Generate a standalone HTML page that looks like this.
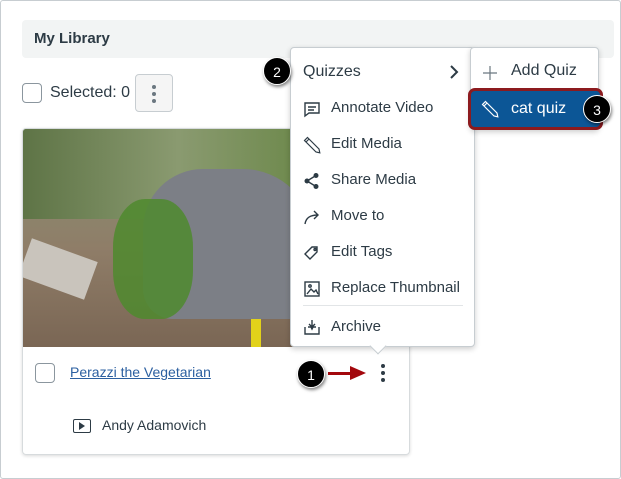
<!DOCTYPE html>
<html><head><style>
*{box-sizing:border-box;margin:0;padding:0}
body{width:621px;height:479px;background:#fff;font-family:"Liberation Sans",sans-serif;color:#2d3b45;position:relative;overflow:hidden}
.frame{position:absolute;left:0;top:0;width:621px;height:479px;border:1px solid #c7cdd1;border-radius:3px}
.hdr{position:absolute;left:22px;top:20px;width:592px;height:38px;background:#f2f4f4;border-radius:4px;font-weight:bold;font-size:15px;line-height:38px;padding-left:12px}
.cb{position:absolute;width:20px;height:20px;border:1px solid #8b969e;border-radius:4px;background:#fff}
.abs{position:absolute}
.card{position:absolute;left:22px;top:128px;width:388px;height:327px;border:1px solid #d7dbdd;border-radius:4px;box-shadow:0 1px 3px rgba(0,0,0,.15);overflow:hidden}
.photo{position:absolute;left:0;top:0;width:388px;height:218px;background:linear-gradient(180deg,#6d7a5a 0%,#8a8a6e 25%,#8f7d68 55%,#7a6654 100%)}
.menu{position:absolute;left:290px;top:47px;width:185px;height:300px;background:#fff;border:1px solid #c7cdd1;border-radius:4px;box-shadow:0 2px 6px rgba(0,0,0,.2)}
.mi{position:absolute;left:40px;font-size:15px;color:#2d3b45}
.ic{position:absolute;left:12px}
.badge{position:absolute;width:28px;height:28px;border-radius:50%;background:#000;color:#fff;font-size:14px;text-align:center;line-height:28px;box-shadow:1px 2px 3px rgba(0,0,0,.5);border:1px solid #fff}
</style></head><body>
<div class="frame"></div>
<div class="hdr">My Library</div>
<div class="cb" style="left:22px;top:83px"></div>
<div class="abs" style="left:50px;top:84px;font-size:16px">Selected: 0</div>
<div class="abs" style="left:135px;top:74px;width:38px;height:38px;border:1px solid #c7cdd1;border-radius:4px;background:#f5f5f5">
<div class="abs" style="left:16px;top:10px;width:4px;height:4px;border-radius:50%;background:#6b7780"></div>
<div class="abs" style="left:16px;top:17px;width:4px;height:4px;border-radius:50%;background:#6b7780"></div>
<div class="abs" style="left:16px;top:24px;width:4px;height:4px;border-radius:50%;background:#6b7780"></div></div>
<div class="card">
<div class="photo">
<div class="abs" style="left:0;top:0;width:388px;height:90px;background:linear-gradient(90deg,#5e7446,#8a9a70 40%,#6f8a4e 70%,#90a070)"></div>
<div class="abs" style="left:120px;top:40px;width:170px;height:150px;background:#7c7f86;border-radius:60px 70px 20px 30px"></div>
<div class="abs" style="left:90px;top:70px;width:80px;height:120px;background:#4f8a2e;border-radius:40%;opacity:.85"></div>
<div class="abs" style="left:0;top:120px;width:70px;height:40px;background:#c9c4bc;transform:rotate(20deg)"></div>
<div class="abs" style="left:228px;top:190px;width:10px;height:28px;background:#e2d21a"></div>
</div>
<div class="cb" style="left:12px;top:234px"></div>
<div class="abs" style="left:47px;top:235px;font-size:14px;color:#2b5fa0;text-decoration:underline">Perazzi the Vegetarian</div>
<div class="abs" style="left:50px;top:290px;width:18px;height:14px;border:1.5px solid #2d3b45;border-radius:2px"></div>
<div class="abs" style="left:56px;top:293px;width:0;height:0;border-left:6px solid #2d3b45;border-top:4px solid transparent;border-bottom:4px solid transparent"></div>
<div class="abs" style="left:79px;top:288px;font-size:14px">Andy Adamovich</div>
<div class="abs" style="left:358px;top:235px;width:4px;height:4px;border-radius:50%;background:#2d3b45"></div>
<div class="abs" style="left:358px;top:242px;width:4px;height:4px;border-radius:50%;background:#2d3b45"></div>
<div class="abs" style="left:358px;top:249px;width:4px;height:4px;border-radius:50%;background:#2d3b45"></div>
</div>
<div class="abs" style="left:328px;top:372px;width:26px;height:3px;background:#a3080d"></div>
<div class="abs" style="left:350px;top:366px;width:0;height:0;border-left:16px solid #a3080d;border-top:7px solid transparent;border-bottom:7px solid transparent"></div>
<div class="badge" style="left:297px;top:360px">1</div>
<div class="menu">
<div class="mi" style="left:12px;top:15px;font-size:16px">Quizzes</div>
<svg class="abs" style="left:157px;top:16px" width="12" height="16" viewBox="0 0 12 16" fill="none" stroke="#2d3b45" stroke-width="2"><path d="M3 2l6 6-6 6"/></svg>
<svg class="ic" style="top:52px" width="18" height="18" viewBox="0 0 18 18" fill="none" stroke="#2d3b45" stroke-width="1.4"><path d="M2 3h14v10H6l-4 3z"/><path d="M5 7h8M5 10h6"/></svg>
<div class="mi" style="top:51px">Annotate Video</div>
<svg class="ic" style="top:88px" width="18" height="18" viewBox="0 0 18 18" fill="none" stroke="#2d3b45" stroke-width="1.2"><path d="M4.5 1.5L16 13l.8 3.8L13 16 1.5 4.5z M3 6l3-3"/></svg>
<div class="mi" style="top:87px">Edit Media</div>
<svg class="ic" style="top:124px" width="18" height="18" viewBox="0 0 18 18"><circle cx="4" cy="9" r="2.5" fill="#2d3b45"/><circle cx="13" cy="3.5" r="2.5" fill="#2d3b45"/><circle cx="13" cy="14.5" r="2.5" fill="#2d3b45"/><path d="M4 9L13 3.5M4 9l9 5.5" stroke="#2d3b45" stroke-width="1.4"/></svg>
<div class="mi" style="top:123px">Share Media</div>
<svg class="ic" style="top:160px" width="18" height="18" viewBox="0 0 18 18" fill="none" stroke="#2d3b45" stroke-width="1.4"><path d="M2 16C3 9 8 7 15 7M11 3l4 4-4 4"/></svg>
<div class="mi" style="top:159px">Move to</div>
<svg class="ic" style="top:196px" width="18" height="18" viewBox="0 0 18 18" fill="none" stroke="#2d3b45" stroke-width="1.4"><path d="M9 3h5v5l-7 7-5-5z"/><circle cx="12" cy="5.5" r="1"/></svg>
<div class="mi" style="top:195px">Edit Tags</div>
<svg class="ic" style="top:232px" width="18" height="18" viewBox="0 0 18 18" fill="none" stroke="#2d3b45" stroke-width="1.4"><rect x="2" y="2" width="14" height="14"/><path d="M4 14l4-5 3 3 2-2 2 4"/><circle cx="7" cy="6" r="1.2"/></svg>
<div class="mi" style="top:231px">Replace Thumbnail</div>
<div class="abs" style="left:12px;top:257px;width:160px;height:1px;background:#e2e5e7"></div>
<svg class="ic" style="top:270px" width="18" height="18" viewBox="0 0 18 18" fill="none" stroke="#2d3b45" stroke-width="1.4"><path d="M2 9v7h14V9M5 9h3l1 2 1-2h3M9 2v7M6 6l3 3 3-3"/></svg>
<div class="mi" style="top:270px">Archive</div>
</div>
<div class="abs" style="left:372px;top:340px;width:12px;height:12px;background:#fff;border-right:1px solid #c7cdd1;border-bottom:1px solid #c7cdd1;transform:rotate(45deg)"></div>
<div class="badge" style="left:263px;top:57px">2</div>
<div class="abs" style="left:470px;top:47px;width:129px;height:83px;background:#fff;border:1px solid #c7cdd1;border-radius:4px;box-shadow:0 2px 6px rgba(0,0,0,.2)">
<svg class="abs" style="left:12px;top:18px" width="14" height="14" viewBox="0 0 14 14" stroke="#6b7780" stroke-width="1.2"><path d="M7 0v14M0 7h14"/></svg>
<div class="abs" style="left:40px;top:14px;font-size:16px">Add Quiz</div>
</div>
<div class="abs" style="left:468px;top:88px;width:135px;height:42px;background:#0c5696;border:3px solid #8c1a1e;border-radius:7px;color:#fff;font-size:16px">
<svg class="abs" style="left:10px;top:9px" width="18" height="18" viewBox="0 0 18 18" fill="none" stroke="#fff" stroke-width="1.2"><path d="M4.5 1.5L16 13l.8 3.8L13 16 1.5 4.5z M3 6l3-3"/></svg>
<div class="abs" style="left:40px;top:9px">cat quiz</div></div>
<div class="badge" style="left:583px;top:95px">3</div>
</body></html>
